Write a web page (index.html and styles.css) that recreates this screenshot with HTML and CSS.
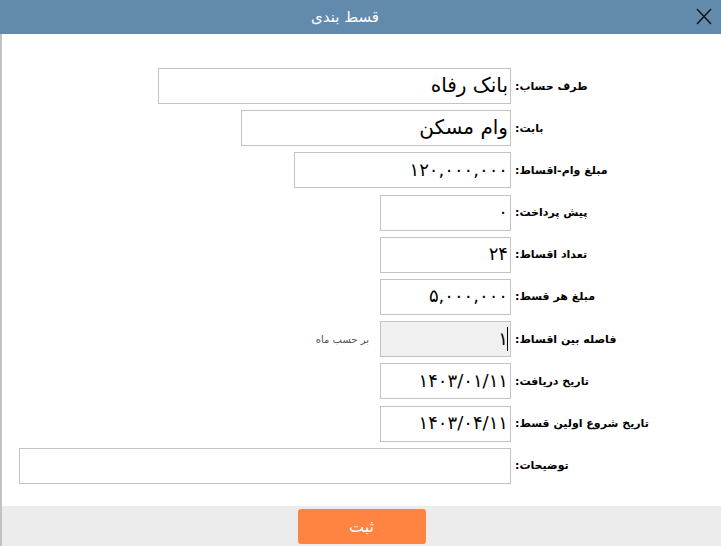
FILE: index.html
```html
<!DOCTYPE html>
<html lang="fa">
<head>
    <meta charset="UTF-8">
    <meta name="viewport" content="width=device-width, initial-scale=1.0">
    <title>قسط بندی</title>
    <link rel="stylesheet" href="styles.css">
</head>
<body>

    <div class="dialog">
        <div class="titlebar">
            <div class="title">قسط بندی</div>
            <button class="close-btn" aria-label="بستن">
                <svg width="16" height="17" viewBox="0 0 16 17">
                    <path d="M1 1 L15 16 M15 1 L1 16" stroke="#111" stroke-width="1.4" fill="none"/>
                </svg>
            </button>
        </div>

        <div class="content">
            <div class="form">
                <div class="row">
                    <div class="fields">
                        <input class="field field-text w-account" type="text" value="بانک رفاه">
                    </div>
                    <label class="label">طرف حساب:</label>
                </div>
                <div class="row">
                    <div class="fields">
                        <input class="field field-text w-subject" type="text" value="وام مسکن">
                    </div>
                    <label class="label">بابت:</label>
                </div>
                <div class="row">
                    <div class="fields">
                        <input class="field w-amount" type="text" value="۱۲۰,۰۰۰,۰۰۰">
                    </div>
                    <label class="label">مبلغ وام-اقساط:</label>
                </div>
                <div class="row">
                    <div class="fields">
                        <input class="field w-small" type="text" value="۰">
                    </div>
                    <label class="label">پیش پرداخت:</label>
                </div>
                <div class="row">
                    <div class="fields">
                        <input class="field w-small" type="text" value="۲۴">
                    </div>
                    <label class="label">تعداد اقساط:</label>
                </div>
                <div class="row">
                    <div class="fields">
                        <input class="field w-small" type="text" value="۵,۰۰۰,۰۰۰">
                    </div>
                    <label class="label">مبلغ هر قسط:</label>
                </div>
                <div class="row">
                    <div class="fields">
                        <span class="note">بر حسب ماه</span>
                        <div class="caret-wrap">
                            <input class="field w-small field-grey" type="text" value="۱">
                        </div>
                    </div>
                    <label class="label">فاصله بین اقساط:</label>
                </div>
                <div class="row">
                    <div class="fields">
                        <input class="field w-small" type="text" value="۱۴۰۳/۰۱/۱۱">
                    </div>
                    <label class="label">تاریخ دریافت:</label>
                </div>
                <div class="row">
                    <div class="fields">
                        <input class="field w-small" type="text" value="۱۴۰۳/۰۴/۱۱">
                    </div>
                    <label class="label">تاریخ شروع اولین قسط:</label>
                </div>
                <div class="row">
                    <div class="fields">
                        <textarea class="field w-notes"></textarea>
                    </div>
                    <label class="label">توضیحات:</label>
                </div>
            </div>
        </div>

        <div class="footer">
            <button class="submit-btn">ثبت</button>
        </div>
    </div>

</body>
</html>
```

FILE: styles.css
```css
body {
    margin: 0;
    padding: 0;
    font-family: "DejaVu Sans", Tahoma, sans-serif;
    background: #fff;
}
.dialog {
    width: 721px;
    height: 546px;
    display: flex;
    flex-direction: column;
    overflow: hidden;
}
.titlebar {
    height: 34px;
    flex-shrink: 0;
    background: #628aac;
    display: flex;
    align-items: center;
}
.title {
    flex: 1;
    text-align: center;
    color: #fff;
    font-size: 15px;
    direction: rtl;
}
.close-btn {
    width: 31px;
    height: 34px;
    padding: 0 0 1px 6px;
    border: none;
    background: transparent;
    display: flex;
    align-items: center;
    justify-content: flex-start;
    cursor: pointer;
}
.content {
    flex: 1;
    border-left: 2px solid #c2c2c2;
    padding-top: 34px;
}
.form {
    display: flex;
    flex-direction: column;
    gap: 6.2px;
}
.row {
    display: flex;
    align-items: center;
}
.fields {
    width: 509px;
    display: flex;
    justify-content: flex-end;
    align-items: center;
    gap: 11px;
}
.label {
    margin-left: 4px;
    font-size: 11px;
    font-weight: bold;
    direction: rtl;
    white-space: nowrap;
    color: #000;
}
.field {
    box-sizing: border-box;
    height: 36px;
    border: 1px solid #c3c3c3;
    background: #fff;
    direction: rtl;
    text-align: right;
    padding: 0 2px 2px 4px;
    font-family: "DejaVu Sans", Tahoma, sans-serif;
    font-size: 18px;
    color: #000;
    outline: none;
    margin: 0;
    resize: none;
}
.field-text {
    font-size: 20px;
}
.field-grey {
    background: #f0f0f0;
}
.w-account { width: 353px; }
.w-subject { width: 270px; }
.w-amount { width: 217px; }
.w-small { width: 131px; }
.w-notes { width: 492px; }
.note {
    font-size: 10px;
    color: #555;
    direction: rtl;
}
.caret-wrap {
    position: relative;
    display: flex;
}
.caret-wrap::after {
    content: "";
    position: absolute;
    right: 3px;
    top: 6px;
    width: 1px;
    height: 24px;
    background: #000;
}
.footer {
    height: 40px;
    flex-shrink: 0;
    background: #ececec;
    border-left: 2px solid #c2c2c2;
    display: flex;
    justify-content: center;
    align-items: flex-start;
}
.submit-btn {
    margin-top: 3px;
    width: 128px;
    height: 35px;
    background: #ff8341;
    border: none;
    border-radius: 3px;
    color: #fff;
    font-family: "DejaVu Sans", Tahoma, sans-serif;
    font-size: 16px;
    cursor: pointer;
}
```
